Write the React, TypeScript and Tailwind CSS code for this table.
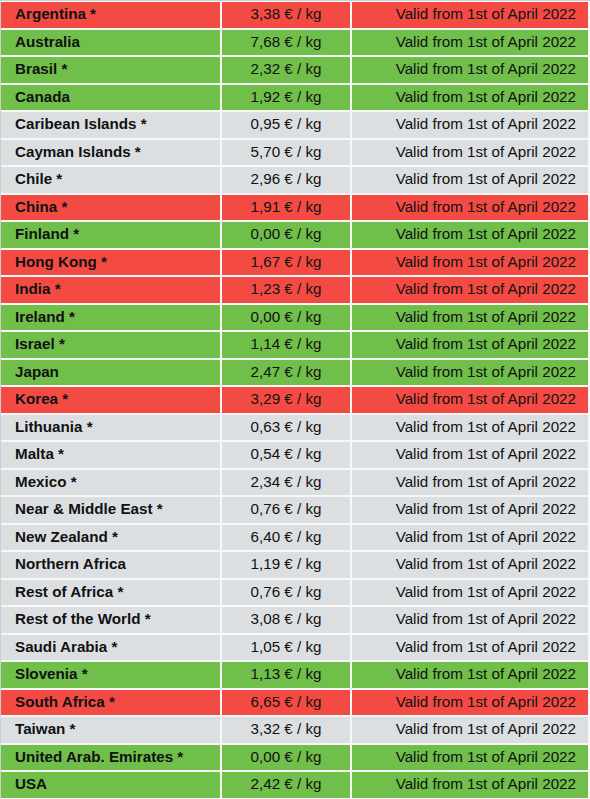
import React from "react";

type Row = { name: string; price: string; c: "r" | "g" | "x" };

const rows: Row[] = [
  { name: "Argentina *", price: "3,38", c: "r" },
  { name: "Australia", price: "7,68", c: "g" },
  { name: "Brasil *", price: "2,32", c: "g" },
  { name: "Canada", price: "1,92", c: "g" },
  { name: "Caribean Islands *", price: "0,95", c: "x" },
  { name: "Cayman Islands *", price: "5,70", c: "x" },
  { name: "Chile *", price: "2,96", c: "x" },
  { name: "China *", price: "1,91", c: "r" },
  { name: "Finland *", price: "0,00", c: "g" },
  { name: "Hong Kong *", price: "1,67", c: "r" },
  { name: "India *", price: "1,23", c: "r" },
  { name: "Ireland *", price: "0,00", c: "g" },
  { name: "Israel *", price: "1,14", c: "g" },
  { name: "Japan", price: "2,47", c: "g" },
  { name: "Korea *", price: "3,29", c: "r" },
  { name: "Lithuania *", price: "0,63", c: "x" },
  { name: "Malta *", price: "0,54", c: "x" },
  { name: "Mexico *", price: "2,34", c: "x" },
  { name: "Near & Middle East *", price: "0,76", c: "x" },
  { name: "New Zealand *", price: "6,40", c: "x" },
  { name: "Northern Africa", price: "1,19", c: "x" },
  { name: "Rest of Africa *", price: "0,76", c: "x" },
  { name: "Rest of the World *", price: "3,08", c: "x" },
  { name: "Saudi Arabia *", price: "1,05", c: "x" },
  { name: "Slovenia *", price: "1,13", c: "g" },
  { name: "South Africa *", price: "6,65", c: "r" },
  { name: "Taiwan *", price: "3,32", c: "x" },
  { name: "United Arab. Emirates *", price: "0,00", c: "g" },
  { name: "USA", price: "2,42", c: "g" },
];

const bg: Record<Row["c"], string> = {
  r: "bg-[#f34b44]",
  g: "bg-[#70bf4b]",
  x: "bg-[#dcdfe2]",
};

export default function App() {
  return (
    <div className="w-[590px] h-[799px] bg-[#f7f7f7] border-t border-l border-[#cfcfcf] pt-[1px] font-['Liberation_Sans',Arial,sans-serif] text-[15.2px] text-[#111]">
      <div className="grid grid-cols-[219px_128px_236px] auto-rows-[25.5px] gap-[2px]">
        {rows.map((r, i) => (
          <React.Fragment key={i}>
            <div className={`${bg[r.c]} flex items-center pl-[14px] font-bold`}>{r.name}</div>
            <div className={`${bg[r.c]} flex items-center justify-center`}>{r.price} € / kg</div>
            <div className={`${bg[r.c]} flex items-center justify-end pr-[12px]`}>Valid from 1st of April 2022</div>
          </React.Fragment>
        ))}
      </div>
    </div>
  );
}
